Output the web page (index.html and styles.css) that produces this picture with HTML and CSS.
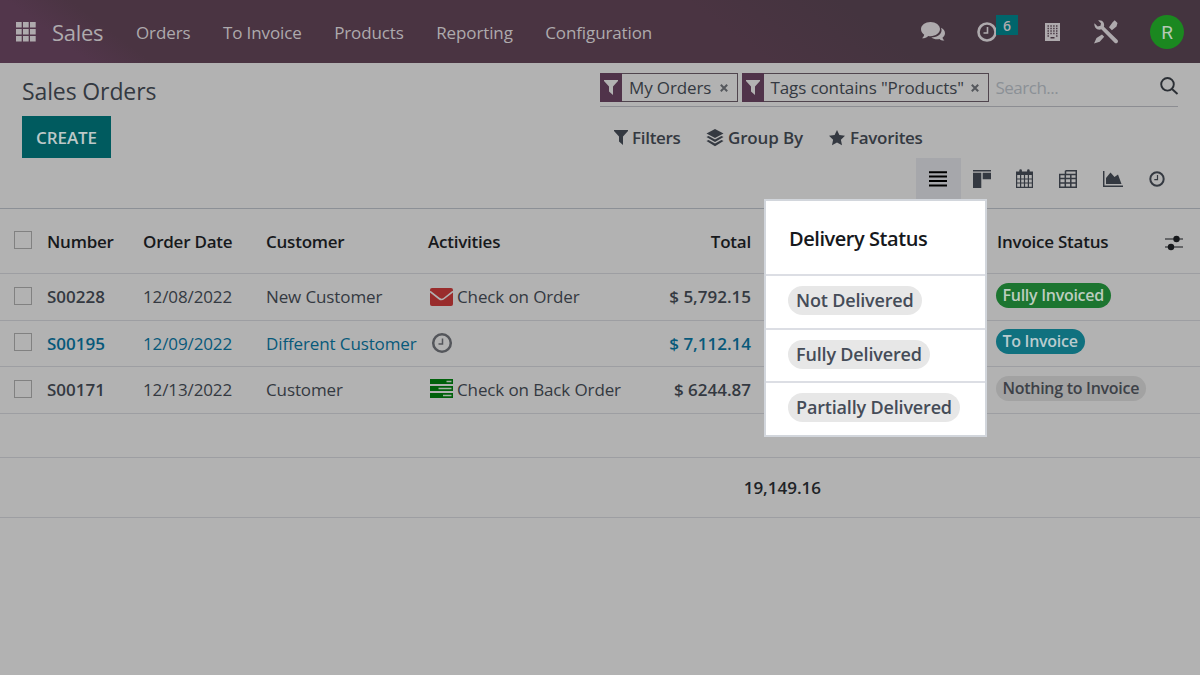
FILE: index.html
```html
<!DOCTYPE html>
<html lang="en">
<head>
  <meta charset="UTF-8">
  <meta name="viewport" content="width=device-width, initial-scale=1.0">
  <title>Sales Orders</title>
  <link rel="stylesheet" href="styles.css">
</head>
<body>
  <header class="navbar">
    <svg class="apps-icon" width="20" height="20" viewBox="0 0 20 20">
      <path d="M0 0h5.7v5.5H0zM7 0h5.7v5.5H7zM14 0h5.7v5.5H14zM0 7h5.7v5.5H0zM7 7h5.7v5.5H7zM14 7h5.7v5.5H14zM0 14h5.7v5.5H0zM7 14h5.7v5.5H7zM14 14h5.7v5.5H14z"/>
    </svg>
    <span class="brand">Sales</span>
    <nav class="menu">
      <a>Orders</a>
      <a>To Invoice</a>
      <a>Products</a>
      <a>Reporting</a>
      <a>Configuration</a>
    </nav>
    <div class="systray">
      <svg class="tray-chat" width="25" height="20" viewBox="0 0 25 20">
        <path d="M17 13.8c3-1.6 4.4-4.9 3-8C22.500 7 24 8.900 24 11.200c0 1.800-1 3.400-2.500 4.500.3 1.100 1.100 2 2 2.700-1.900.2-3.800-.4-5-1.500-2.800.6-6 .2-8.200-1.500 2.300-.1 4.800-.6 6.700-1.600z"/>
        <path d="M9.500 0C14.700 0 19 3.200 19 7.100s-4.300 7.100-9.500 7.100c-.8 0-1.500-.1-2.200-.2C5.700 15.500 3.500 16.400 1 16.300c1.100-.9 1.900-2 2.200-3.500C1.200 11.500 0 9.400 0 7.100 0 3.200 4.300 0 9.500 0z"/>
      </svg>
      <div class="tray-activity">
        <svg width="20" height="20" viewBox="0 0 20 20">
          <circle cx="10" cy="10" r="8.500" fill="none" stroke="currentColor" stroke-width="2.600"/>
          <path d="M10.500 5v6H6.500" fill="none" stroke="currentColor" stroke-width="1.600"/>
        </svg>
        <span class="tray-count">6</span>
      </div>
      <svg class="tray-company" width="15" height="18" viewBox="0 0 15 18">
        <path d="M0 0h15v18H0z"/>
        <path class="windows" d="M2.500 3h10M2.500 5.500h10M2.500 8h10M2.500 10.500h10" stroke-dasharray="1.400 1.450"/>
        <path class="windows" d="M2.500 13h1.400M11.100 13h1.400M5.500 14.800h4"/>
      </svg>
      <svg class="tray-tools" width="24" height="24" viewBox="0 0 24 24">
        <path d="M20.700.3l2.800 2.800-1 3.300-4.600 3.800-2.900-2.900 3.600-5zM8 14.500l2.200 2.200-4.500 5L0 23.500l2.500-5.400z"/>
        <path d="M4.200.4C6.300-.1 8.500.800 9.500 2.600c.7 1.400.8 2.800.4 4.200l13.400 13c1 1 .8 2.200.1 2.900-.8.700-2 .8-2.800 0L7.300 9.300c-2.300.8-4.600.1-5.900-1.600C.4 6.300.100 4.800.500 3.300l3.200 3.100 2.800-.6.500-2.600z"/>
      </svg>
      <span class="avatar">R</span>
    </div>
  </header>

  <section class="control-panel">
    <div class="cp-left">
      <h1>Sales Orders</h1>
      <button class="btn-create">CREATE</button>
    </div>
    <div class="cp-right">
      <div class="search-bar">
        <div class="facet facet-orders">
          <span class="facet-icon"><svg width="14" height="15" viewBox="0 0 14 15"><path d="M0 0h14v1L9 6.500V15l-4-3.500v-5L0 1z"/></svg></span>
          <span class="facet-label">My Orders</span>
          <svg class="facet-close" width="8" height="8" viewBox="0 0 8 8"><path d="M.8.800l6.400 6.400M7.200.8L.8 7.200"/></svg>
        </div>
        <div class="facet facet-tags">
          <span class="facet-icon"><svg width="14" height="15" viewBox="0 0 14 15"><path d="M0 0h14v1L9 6.500V15l-4-3.500v-5L0 1z"/></svg></span>
          <span class="facet-label">Tags contains "Products"</span>
          <svg class="facet-close" width="8" height="8" viewBox="0 0 8 8"><path d="M.8.800l6.400 6.400M7.200.8L.8 7.200"/></svg>
        </div>
        <span class="search-input">Search...</span>
        <svg class="search-icon" width="19" height="18" viewBox="0 0 19 18"><circle cx="7.500" cy="7.300" r="6.300"/><path d="M12 12l5.500 5"/></svg>
      </div>
      <div class="search-options">
        <span class="option option-filters">
          <svg width="14" height="15" viewBox="0 0 14 15"><path d="M0 0h14v1L9 6.500V15l-4-3.500v-5L0 1z"/></svg>Filters
        </span>
        <span class="option option-group">
          <svg width="18" height="18" viewBox="0 0 18 18"><path d="M9 0l8.500 4.500L9 9 .5 4.500z"/><path d="M.500 8l2-1L9 10.500 15.500 7l2 1L9 13z"/><path d="M.500 12l2-1L9 14.500l6.500-3.500 2 1L9 17.200z"/></svg>Group By
        </span>
        <span class="option option-favorites">
          <svg width="16" height="16" viewBox="0 0 16 16"><path d="M8 0l2.400 5.100 5.600.7-4.100 3.900 1.100 5.600L8 12.600l-5 2.700 1.100-5.600L0 5.800l5.600-.7z"/></svg>Favorites
        </span>
      </div>
      <div class="view-switcher">
        <span class="view active"><svg width="18" height="16" viewBox="0 0 18 16"><path d="M0 .200h18v2H0zM0 4.600h18v2H0zM0 9h18v2H0zM0 13.400h18v2H0z"/></svg></span>
        <span class="view"><svg width="18" height="18" viewBox="0 0 18 18"><path d="M0 0h18v1.500H0zM0 2.800h8.300V18H0zM9.700 2.800H18v6.400H9.700z"/></svg></span>
        <span class="view view-calendar">
          <svg width="17" height="19" viewBox="0 0 17 19">
            <path d="M.600 3h15.800v3H.600z"/>
            <path class="line" d="M.600 3h15.800v15.300H.600z"/>
            <path class="line" d="M.600 10h15.800M.600 14h15.800M4.600 6v12M8.500 6v12M12.400 6v12" stroke-width=".9"/>
            <path class="ring" d="M4.600 1.500v2.500M12.400 1.500v2.500"/>
          </svg>
        </span>
        <span class="view view-pivot">
          <svg width="18" height="18" viewBox="0 0 18 18"><path class="line thick" d="M6.500.700h10.800v16.600H.700V4.500h16.600M.700 8.500h16.600M.700 12.900h16.600M6.300 4.500v12.800M11.800 4.500v12.800M6.500.700v4"/></svg>
        </span>
        <span class="view">
          <svg width="20" height="16" viewBox="0 0 20 16"><path class="line thick" d="M.700 0v15.200H20"/><path d="M3 13V7l4.500-5.500 4 4.500L15 3.500 18.500 13z"/></svg>
        </span>
        <span class="view">
          <svg width="16" height="16" viewBox="0 0 16 16"><circle class="line ring-clock" cx="8" cy="8" r="6.700"/><path class="line" d="M8.500 4v4.700H5.300"/></svg>
        </span>
      </div>
    </div>
  </section>

  <main class="order-list">
    <div class="row head">
      <i class="checkbox"></i>
      <span class="number">Number</span>
      <span class="date">Order Date</span>
      <span class="customer">Customer</span>
      <span class="activity">Activities</span>
      <span class="total">Total</span>
      <span class="invoice">Invoice Status</span>
      <svg class="columns-icon" width="18" height="16" viewBox="0 0 18 16"><path class="line" d="M0 4h18M0 12h18"/><circle cx="11.500" cy="4" r="3.200"/><circle cx="6" cy="12" r="3.200"/></svg>
    </div>
    <div class="row">
      <i class="checkbox"></i>
      <span class="number">S00228</span>
      <span class="date">12/08/2022</span>
      <span class="customer">New Customer</span>
      <span class="activity">
        <svg class="mail-icon" width="23" height="18" viewBox="0 0 23 18"><rect width="23" height="18" rx="2"/><path d="M0 3.500l9 7q2.500 2 5 0l9-7"/></svg>
        Check on Order
      </span>
      <span class="total">$ 5,792.15</span>
      <span class="invoice"><b class="badge success">Fully Invoiced</b></span>
    </div>
    <div class="row highlight">
      <i class="checkbox"></i>
      <span class="number">S00195</span>
      <span class="date">12/09/2022</span>
      <span class="customer">Different Customer</span>
      <span class="activity">
        <svg class="clock-icon" width="22" height="22" viewBox="0 0 22 22"><circle cx="11" cy="11" r="8.800" stroke-width="2.500"/><path d="M11.500 6.500v5.500H7.500" stroke-width="1.500"/></svg>
      </span>
      <span class="total">$ 7,112.14</span>
      <span class="invoice"><b class="badge info">To Invoice</b></span>
    </div>
    <div class="row">
      <i class="checkbox"></i>
      <span class="number">S00171</span>
      <span class="date">12/13/2022</span>
      <span class="customer">Customer</span>
      <span class="activity">
        <svg class="tasks-icon" width="23" height="19" viewBox="0 0 23 19"><path d="M0 0h23v5H0zM0 7h23v5H0zM0 14h23v5H0z"/><path class="gap" d="M16.500 2.500H21.500M8.500 9.500h13M13 16.500h8.500"/></svg>
        Check on Back Order
      </span>
      <span class="total">$ 6244.87</span>
      <span class="invoice"><b class="badge muted">Nothing to Invoice</b></span>
    </div>
    <div class="row empty"></div>
    <div class="row summary">
      <span class="grand-total">19,149.16</span>
    </div>
  </main>

  <!-- Spotlighted column, floats over the list -->
  <aside class="delivery">
    <div class="delivery-head">Delivery Status</div>
    <div class="delivery-row"><span class="pill">Not Delivered</span></div>
    <div class="delivery-row"><span class="pill">Fully Delivered</span></div>
    <div class="delivery-row"><span class="pill">Partially Delivered</span></div>
  </aside>
</body>
</html>
```
FILE: styles.css
```css
* {
  margin: 0;
  padding: 0;
  box-sizing: border-box;
}

body {
  position: relative;
  width: 1200px;
  height: 675px;
  overflow: hidden;
  background-color: #b2b2b2;
  color: #343941;
  font-family: "Open Sans", "Noto Sans", sans-serif;
  font-size: 17px;
  letter-spacing: -0.12px;
  white-space: nowrap;
}

svg {
  display: block;
  flex: none;
  fill: currentColor;
}

.line {
  fill: none;
  stroke: currentColor;
  stroke-width: 1.2;
}

.thick {
  stroke-width: 1.5;
}

.ring {
  fill: none;
  stroke: currentColor;
  stroke-width: 2.6;
  stroke-linecap: round;
}

.ring-clock {
  stroke-width: 2;
}

/* Top bar */
.navbar {
  display: flex;
  align-items: center;
  height: 63px;
  padding: 0 16px;
  background: linear-gradient(37deg, #52364b 0%, #52364b 7%, #4a3442 12%, #4a3442 60%, #44343f 72%);
  color: #aeaaad;
}

.brand {
  width: 84px;
  padding-left: 16px;
  font-size: 22px;
  letter-spacing: -0.3px;
}

.menu {
  display: flex;
  gap: 32.5px;
  padding-left: 16px;
  margin-top: 1px;
}

.systray {
  display: flex;
  align-items: center;
  margin-left: auto;
}

.tray-chat {
  margin-right: 31px;
}

.tray-activity {
  position: relative;
  margin-right: 48px;
}

.tray-count {
  position: absolute;
  left: 19px;
  top: -7px;
  width: 22px;
  height: 20px;
  background-color: #00656b;
  font-size: 14px;
  font-weight: 600;
  line-height: 21px;
  text-align: center;
}

.tray-company {
  margin-right: 34px;
}

.windows {
  stroke: #44343f;
  stroke-width: 1.4;
}

.tray-tools {
  margin-right: 32px;
}

.avatar {
  width: 34px;
  height: 34px;
  border-radius: 50%;
  background-color: #1b8820;
  color: #b6c9b6;
  font-family: Roboto, sans-serif;
  font-size: 19px;
  line-height: 35px;
  text-align: center;
}

/* Control panel */
.control-panel {
  display: flex;
  justify-content: space-between;
  height: 146px;
  padding: 0 22px;
  border-bottom: 1px solid #8c9096;
}

h1 {
  margin-top: 11px;
  font-size: 23px;
  font-weight: 400;
  line-height: 34px;
}

.btn-create {
  display: block;
  width: 89px;
  height: 42px;
  margin-top: 8px;
  border: 0;
  background-color: #005b5f;
  color: #bcc8c8;
  font-family: inherit;
  font-size: 17px;
  font-weight: 600;
  letter-spacing: -0.1px;
}

.cp-right {
  width: 578px;
}

.search-bar {
  display: flex;
  gap: 4px;
  height: 44px;
  padding-top: 10px;
  border-bottom: 1px solid #8c8d92;
}

.facet {
  display: flex;
  align-items: center;
  height: 29px;
  border: 1px solid #50454e;
  border-left: 0;
}

.facet-orders {
  width: 137.5px;
}

.facet-tags {
  width: 247px;
}

.facet-icon {
  display: flex;
  align-items: center;
  justify-content: center;
  width: 22px;
  height: 29px;
  background-color: #50334a;
  color: #b2b2b2;
}

.facet-label {
  padding-left: 7px;
}

.facet-close {
  margin: 0 9px 0 auto;
  stroke: #55585d;
  stroke-width: 2;
}

.search-input {
  padding-left: 3px;
  color: #8b9096;
  letter-spacing: -0.5px;
  line-height: 29px;
}

.search-icon {
  margin: 4px -1px 0 auto;
  fill: none;
  stroke: #2b2f35;
  stroke-width: 1.9;
}

.search-options {
  display: flex;
  height: 51px;
  padding: 18px 0 0 14px;
  font-weight: 600;
  letter-spacing: -0.3px;
}

.option {
  display: flex;
  align-items: center;
  gap: 4px;
  height: 25px;
}

.option-filters {
  width: 92px;
}

.option-group {
  width: 123px;
  letter-spacing: -0.15px;
}

.option-favorites {
  gap: 5px;
}

.view-switcher {
  display: flex;
  height: 41px;
  margin-right: -1px;
  justify-content: flex-end;
}

.view {
  display: flex;
  align-items: center;
  justify-content: center;
  width: 43.7px;
}

.view.active {
  width: 45px;
  background-color: #a6a7ab;
  color: #000;
}

.view-calendar {
  padding-right: 3px;
}

.view-pivot {
  padding-right: 3px;
}

/* Order list */
.row {
  display: grid;
  grid-template-columns: 33px 96px 123px 162px 212px 111px 245px 168px 1fr;
  align-items: center;
  height: 46.5px;
  padding-left: 14px;
  border-bottom: 1px solid #9d9ea2;
}

.row.head {
  height: 65px;
  color: #17191c;
  font-weight: 600;
  letter-spacing: -0.23px;
}

.checkbox {
  width: 18px;
  height: 18px;
  margin-top: -2px;
  border: 1px solid #818181;
}

.number,
.total {
  font-weight: 600;
}

.total {
  text-align: right;
}

.row:not(.head) .total,
.row:not(.head) .number {
  letter-spacing: 0;
}

.invoice {
  grid-column: 8;
}

.head .invoice {
  padding-left: 1px;
}

.highlight {
  color: #07597a;
}

.activity {
  display: flex;
  align-items: center;
  gap: 4px;
  padding-left: 2px;
}

.head .activity {
  padding-left: 0;
}

.mail-icon {
  fill: #992c2c;
}

.mail-icon path {
  fill: none;
  stroke: #b2b2b2;
  stroke-width: 1.6;
}

.clock-icon {
  margin-left: 1px;
  fill: none;
  stroke: #54565b;
}

.tasks-icon {
  margin-top: -3px;
  fill: #00610b;
}

.tasks-icon .gap {
  stroke: #a6b2a6;
  stroke-width: 1.6;
}

.columns-icon {
  margin: 3px 0 0 1px;
}

.badge {
  display: inline-block;
  height: 25px;
  padding: 0 7px;
  margin: 0 0 3px -0.5px;
  border-radius: 13px;
  font-size: 16px;
  font-weight: 600;
  letter-spacing: -0.28px;
  line-height: 25px;
  vertical-align: middle;
}

.success {
  background-color: #1c7530;
  color: #bccdbf;
}

.info {
  background-color: #10717f;
  color: #b9cbce;
}

.muted {
  background-color: #a2a2a2;
  color: #3d4148;
}

.row.empty {
  height: 44.5px;
}

.row.summary {
  display: block;
  height: 60px;
  padding: 0 379px 0 0;
  color: #202327;
  font-weight: 600;
  letter-spacing: 0;
  line-height: 60px;
  text-align: right;
}

/* Delivery status column */
.delivery {
  position: absolute;
  left: 764px;
  top: 199px;
  width: 222.5px;
  height: 238px;
  border: 2px solid #d2d6dc;
  background-color: #fff;
}

.delivery-head {
  height: 73px;
  padding-left: 23px;
  color: #16181c;
  font-size: 20px;
  font-weight: 600;
  letter-spacing: -0.45px;
  line-height: 75px;
}

.delivery-row {
  display: flex;
  align-items: center;
  height: 53.7px;
  padding: 0 0 3px 22px;
  border-top: 2px solid #dcdee4;
}

.pill {
  height: 29px;
  padding: 0 8px;
  border-radius: 15px;
  background-color: #e7e7e7;
  color: #454c58;
  font-size: 18px;
  font-weight: 600;
  letter-spacing: -0.17px;
  line-height: 28px;
}
```
